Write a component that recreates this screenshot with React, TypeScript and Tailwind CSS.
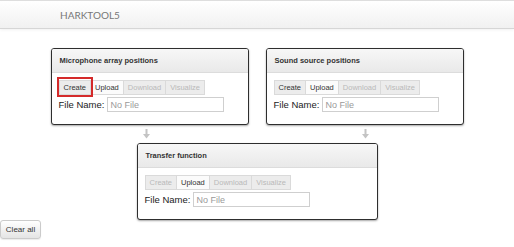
import React from "react";

type Btn = { label: string; enabled: boolean; white?: boolean; outlined?: boolean };

function Arrow() {
  return (
    <svg width="7" height="10" viewBox="0 0 7 10">
      <rect x="2.5" y="0" width="2" height="6" fill="#c4c4c4" />
      <polygon points="0,5 7,5 3.5,9.5" fill="#c4c4c4" />
    </svg>
  );
}

function Panel({ title, buttons, width }: { title: string; buttons: Btn[]; width: string }) {
  return (
    <div
      className={`${width} h-[77px] border-[1.5px] border-[#2e2e2e] rounded-[3px] bg-white shadow-[0_1px_2px_rgba(0,0,0,0.35)] flex flex-col overflow-visible`}
    >
      <div className="h-[24px] shrink-0 bg-gradient-to-b from-[#f7f7f7] to-[#e9e9e9] border-b border-[#dcdcdc] flex items-center pl-[8px] rounded-t-[2px]">
        <span className="text-[7.5px] font-bold text-[#333] leading-none">{title}</span>
      </div>
      <div className="pl-[7px] pt-[7px] flex flex-col">
        <div className="flex h-[15px]">
          {buttons.map((b) => (
            <div
              key={b.label}
              className={`relative h-[15px] px-[4px] flex items-center text-[7.5px] leading-none border border-[#dadada] -ml-px first:ml-0 ${
                b.white ? "bg-[#fbfbfb]" : "bg-[#ececec]"
              } ${b.enabled ? "text-[#333]" : "text-[#b9b9b9]"} ${b.outlined ? "z-10" : ""}`}
            >
              {b.label}
              {b.outlined && (
                <span className="absolute z-10 left-[-3px] right-[-3px] top-[-4px] bottom-[-3px] border-2 border-solid border-[#d42a2a] pointer-events-none" />
              )}
            </div>
          ))}
        </div>
        <div className="flex items-center mt-[2px] h-[15px]">
          <span className="text-[9.5px] text-[#222] leading-none">File Name:</span>
          <input
            readOnly
            placeholder="No File"
            className="ml-[3px] w-[117px] h-[15px] border border-[#cfcfcf] bg-white px-[2px] text-[9px] leading-none placeholder:text-[#9a9a9a] outline-none font-['Liberation_Sans',sans-serif]"
          />
        </div>
      </div>
    </div>
  );
}

export default function App() {
  return (
    <div className="w-[514px] h-[247px] bg-white overflow-hidden font-['Liberation_Sans',Arial,sans-serif]">
      <div className="h-[29px] border-t border-[#dedede] border-b border-b-[#d6d6d6] bg-gradient-to-b from-white to-[#f1f1f1] shadow-[0_1px_3px_rgba(0,0,0,0.06)] flex items-center pl-[60px]">
        <span className="font-['Lato',sans-serif] text-[10px] text-[#777] leading-none">HARKTOOL5</span>
      </div>
      <div className="flex flex-col items-center pt-[19px]">
        <div className="flex gap-[17px]">
          <Panel
            title="Microphone array positions"
            width="w-[198px]"
            buttons={[
              { label: "Create", enabled: true, outlined: true },
              { label: "Upload", enabled: true, white: true },
              { label: "Download", enabled: false },
              { label: "Visualize", enabled: false },
            ]}
          />
          <Panel
            title="Sound source positions"
            width="w-[198px]"
            buttons={[
              { label: "Create", enabled: true },
              { label: "Upload", enabled: true, white: true },
              { label: "Download", enabled: false },
              { label: "Visualize", enabled: false },
            ]}
          />
        </div>
        <div className="flex gap-[17px] h-[18px] items-center">
          <div className="w-[198px] flex justify-center pr-[6px]">
            <Arrow />
          </div>
          <div className="w-[198px] flex justify-center pl-[2px]">
            <Arrow />
          </div>
        </div>
        <Panel
          title="Transfer function"
          width="w-[241px]"
          buttons={[
            { label: "Create", enabled: false },
            { label: "Upload", enabled: true, white: true },
            { label: "Download", enabled: false },
            { label: "Visualize", enabled: false },
          ]}
        />
        <div className="self-start flex">
          <button className="h-[19px] w-[41px] border border-[#cbcbcb] rounded-[3px] bg-gradient-to-b from-white to-[#e4e4e4] text-[8px] text-[#333] leading-none shadow-[0_1px_1px_rgba(0,0,0,0.08)]">
            Clear all
          </button>
        </div>
      </div>
    </div>
  );
}
